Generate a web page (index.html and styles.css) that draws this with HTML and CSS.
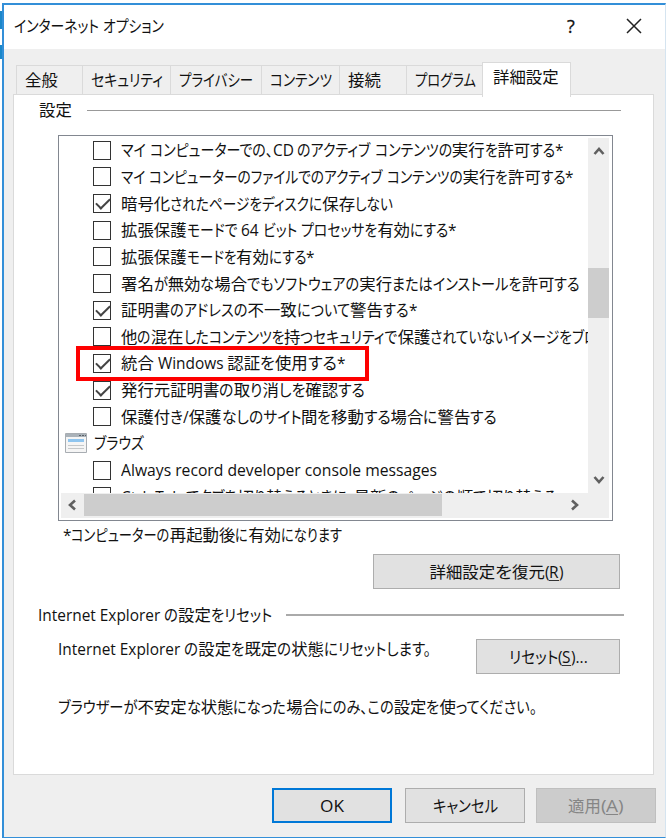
FILE: index.html
```html
<!DOCTYPE html>
<html lang="ja">
<head>
<meta charset="utf-8">
<title>インターネット オプション</title>
<link rel="stylesheet" href="styles.css">
</head>
<body>
<div class="edge"><i></i><i></i></div>
<main class="window">
  <header class="titlebar">
    <span class="fit" data-w="150">インターネット オプション</span>
    <span class="help">?</span>
    <svg class="close" viewBox="0 0 16 16"><path d="M1 1 15 15M15 1 1 15"/></svg>
  </header>
  <nav class="tabs">
    <div class="tab t1"><span class="fit" data-w="33">全般</span></div>
    <div class="tab t2"><span class="fit" data-w="72">セキュリティ</span></div>
    <div class="tab t3"><span class="fit" data-w="74">プライバシー</span></div>
    <div class="tab t4"><span class="fit" data-w="62">コンテンツ</span></div>
    <div class="tab t5"><span class="fit" data-w="33">接続</span></div>
    <div class="tab t6"><span class="fit" data-w="61">プログラム</span></div>
    <div class="tab active"><span class="fit" data-w="66">詳細設定</span></div>
  </nav>
  <section class="pane">
    <div class="heading h-settings"><span class="fit" data-w="33">設定</span><hr></div>
    <div class="listbox">
      <div class="view">
        <div class="row"><i class="box"></i><span class="fit" data-w="443">マイ コンピューターでの、CD のアクティブ コンテンツの実行を許可する*</span></div>
        <div class="row"><i class="box"></i><span class="fit" data-w="453">マイ コンピューターのファイルでのアクティブ コンテンツの実行を許可する*</span></div>
        <div class="row"><i class="box on"></i><span class="fit" data-w="272">暗号化されたページをディスクに保存しない</span></div>
        <div class="row"><i class="box"></i><span class="fit" data-w="336">拡張保護モードで 64 ビット プロセッサを有効にする*</span></div>
        <div class="row"><i class="box"></i><span class="fit" data-w="194">拡張保護モードを有効にする*</span></div>
        <div class="row"><i class="box"></i><span class="fit" data-w="459">署名が無効な場合でもソフトウェアの実行またはインストールを許可する</span></div>
        <div class="row"><i class="box on"></i><span class="fit" data-w="296">証明書のアドレスの不一致について警告する*</span></div>
        <div class="row"><i class="box"></i><span class="fit" data-w="477">他の混在したコンテンツを持つセキュリティで保護されていないイメージをブロ</span></div>
        <div class="row"><i class="box on"></i><span class="fit" data-w="224">統合 Windows 認証を使用する*</span></div>
        <div class="row"><i class="box on"></i><span class="fit" data-w="244">発行元証明書の取り消しを確認する</span></div>
        <div class="row"><i class="box"></i><span class="fit" data-w="376">保護付き/保護なしのサイト間を移動する場合に警告する</span></div>
        <div class="row group">
          <svg class="page" viewBox="0 0 22 20"><path fill="#f5f5f5" stroke="#a8adb2" d="M.5.5h21v19H.5z"/><path fill="#aab2b9" d="M1 1h20v3H1z"/><path stroke="#596168" stroke-dasharray="2 1" d="M14 2.5h7"/><path fill="#8fc5ef" d="M3 6h16v3H3z"/><path stroke="#c5c8ca" d="M3 12.5h16M3 15.5h16"/></svg>
          <span class="fit" data-w="50">ブラウズ</span>
        </div>
        <div class="row"><i class="box"></i><span class="fit" data-w="316">Always record developer console messages</span></div>
        <div class="row"><i class="box"></i><span class="fit" data-w="436">Ctrl+Tab でタブを切り替えるときに、最新のページの順で切り替える</span></div>
      </div>
      <div class="vbar">
        <svg viewBox="0 0 12 10"><path d="M1.5 8 6 3 10.500 8"/></svg>
        <div class="vthumb"></div>
        <svg class="down" viewBox="0 0 12 10"><path d="M1.500 2 6 7 10.500 2"/></svg>
      </div>
      <div class="hbar">
        <svg viewBox="0 0 10 12"><path d="M8 1.500 3 6 8 10.500"/></svg>
        <div class="hthumb"></div>
        <svg class="right" viewBox="0 0 10 12"><path d="M2 1.500 7 6 2 10.500"/></svg>
      </div>
      <div class="highlight"></div>
    </div>
    <p class="note"><span class="fit" data-w="279">*コンピューターの再起動後に有効になります</span></p>
    <div class="btn restore"><span class="fit" data-w="134">詳細設定を復元(<u>R</u>)</span></div>
    <div class="heading h-reset"><span class="fit" data-w="234">Internet Explorer の設定をリセット</span><hr></div>
    <div class="reset">
      <span class="fit" data-w="373">Internet Explorer の設定を既定の状態にリセットします。</span>
      <div class="btn"><span class="fit" data-w="79">リセット(<u>S</u>)...</span></div>
    </div>
    <p class="advice"><span class="fit" data-w="479">ブラウザーが不安定な状態になった場合にのみ、この設定を使ってください。</span></p>
  </section>
  <footer class="actions">
    <div class="btn primary"><span class="fit" data-w="24">OK</span></div>
    <div class="btn"><span class="fit" data-w="65">キャンセル</span></div>
    <div class="btn disabled"><span class="fit" data-w="56">適用(<u>A</u>)</span></div>
  </footer>
</main>
<script src="labels.js"></script>
</body>
</html>
```
FILE: styles.css
```css
* { box-sizing: border-box; }
body {
  margin: 0;
  width: 666px;
  height: 839px;
  overflow: hidden;
  display: flex;
  background: #fff;
  color: #111;
  font: 16.4px/26px "Open Sans", "Noto Sans CJK JP", sans-serif;
  font-feature-settings: "palt";
}
p { margin: 0; }
.edge { width: 2px; flex: none; padding-top: 11px; }
.edge i { display: block; height: 18px; background: #1b87c9; }
.edge i + i { margin-top: 16px; height: 14px; }
.window {
  flex: none;
  width: 664px;
  height: 835px;
  margin-top: 3px;
  border: 2px solid #338fd8;
  border-width: 2px 1px 1px 2px;
  border-right-color: #d5e4f0;
  background: #efefef;
}
.fit { display: inline-block; white-space: pre; flex: none; }
.run { display: inline-block; white-space: pre; transform-origin: 0 50%; }
u { text-decoration: none; box-shadow: inset 0 -1px #333; display: inline-block; height: 22px; line-height: 26px; vertical-align: baseline; }

.titlebar {
  display: flex;
  align-items: center;
  height: 44px;
  padding: 0 23px 2px 10px;
  background: #fff;
}
.help { margin-left: auto; font-size: 18px; width: 9px; -webkit-text-stroke: .3px #111; }
.close { width: 16px; height: 16px; margin-left: 50px; fill: none; stroke: #222; stroke-width: 1.5; }

.tabs { display: flex; align-items: flex-end; height: 46px; padding: 0 0 0 12px; }
.tab {
  height: 30px;
  border-top: 1.5px solid #dadada;
  border-left: 1.5px solid #dadada;
  padding: 1px 0 0 8px;
}
.t1 { width: 66px; }
.t2 { width: 88px; }
.t3 { width: 91px; }
.t4 { width: 78px; }
.t5 { width: 67px; }
.t6 { width: 76px; }
.tab.active {
  width: 89px;
  height: 35px;
  margin-bottom: -2px;
  padding: 1px 0 0 10px;
  border-right: 1.5px solid #dadada;
  background: #fff;
  position: relative;
}
.pane {
  width: 641px;
  height: 681px;
  margin-left: 9px;
  border: 1.5px solid #dadada;
  background: #fff;
}
.tabs + .pane { margin-top: -1px; }

.heading { display: flex; align-items: center; }
.heading hr { height: 1px; border: 0; margin: 0; background: #999; }
.h-settings { height: 26px; margin-top: 2px; padding-left: 25px; }
.h-settings hr { width: 534px; margin-left: 15px; }

.listbox {
  position: relative;
  display: grid;
  grid-template: 355px 25px / 527px 23px;
  width: 555px;
  height: 386px;
  margin: 12px 0 0 44px;
  padding: 2px;
  border: 1px solid #828790;
  background: #fff;
}
.view { overflow: hidden; }
.row { display: flex; align-items: center; height: 26.65px; padding-left: 32px; }
.row:first-child { margin-top: -1px; }
.box {
  flex: none;
  width: 18px;
  height: 19px;
  margin-right: 10px;
  border: 1.5px solid #333;
  position: relative;
}
.box.on::after {
  content: "";
  position: absolute;
  left: 2px;
  top: 3px;
  width: 12px;
  height: 6px;
  border: solid #444;
  border-width: 0 0 2px 2px;
  transform: rotate(-45deg);
}
.group { padding-left: 4px; }
.page { width: 22px; height: 20px; margin-right: 7px; fill: none; }
.vbar { width: 21px; background: #efefef; display: flex; flex-direction: column; align-items: center; padding: 8px 0; }
.vbar svg { width: 12px; height: 10px; }
.listbox svg:not(.page) { fill: none; stroke: #606060; stroke-width: 2.6; flex: none; }
.vthumb { width: 21px; height: 50px; margin-top: 112px; background: #cdcdcd; }
.down { margin-top: 157px; }
.hbar { grid-column: 1 / 3; width: 548px; height: 25px; background: #efefef; display: flex; align-items: center; padding: 0 0 2px 6px; }
.hbar svg { width: 10px; height: 12px; }
.hthumb { width: 358px; height: 22px; margin-left: 7px; background: #cdcdcd; }
.right { margin-left: 128px; }
.highlight { position: absolute; left: 17px; top: 210px; width: 293px; height: 35px; border: 4px solid #fe0000; }

.note { height: 26px; margin: 1px 0 0 49px; }
.btn {
  flex: none;
  display: flex;
  align-items: center;
  justify-content: center;
  width: 120px;
  height: 35px;
  border: 1.5px solid #adadad;
  background: #e1e1e1;
}
.restore { width: 247px; margin: 6px 0 0 359px; }
.h-reset { height: 26px; margin-top: 13px; padding-left: 24px; }
.h-reset hr { width: 338px; margin-left: 14px; height: 2px; background: #aaa; }
.reset { display: flex; align-items: flex-start; margin-top: 8px; padding-left: 44px; height: 52px; }
.reset .btn { width: 144px; margin: 3px 0 0 45px; }
.advice { padding-left: 44px; margin-top: 6px; }

.actions { display: flex; margin: 13px 0 0 268px; }
.btn.primary { border: 2px solid #0078d7; }
.actions .btn + .btn { margin-left: 13px; }
.actions .btn + .disabled { margin-left: 11px; }
.btn.disabled { background: #cccccc; border-color: #bfbfbf; color: #858585; }
.disabled u { box-shadow: inset 0 -1px #858585; }
```
FILE: labels.js
```js
// Condense kana so that every label takes its UI width; kanji keep their full width.
const pattern = /[\u3040-\u30ff\u3001\u3002]+|[\u0020-\u007e]+|[^\u0020-\u007e\u3040-\u30ff\u3001\u3002]+/g;
for (const label of document.querySelectorAll('.fit')) {
  const target = Number(label.dataset.w);
  const walker = document.createTreeWalker(label, NodeFilter.SHOW_TEXT);
  const nodes = [];
  while (walker.nextNode()) nodes.push(walker.currentNode);
  const runs = [];
  for (const node of nodes) {
    const parts = node.data.match(pattern).map(text => {
      const span = document.createElement('span');
      span.className = 'run';
      span.textContent = text;
      const kind = /[\u3040-\u30ff\u3001]/.test(text) ? 'kana' : /[ -~]/.test(text) ? 'latin' : 'kanji';
      runs.push({ span, kind });
      return span;
    });
    node.replaceWith(...parts);
  }
  const sum = kind => runs.filter(r => r.kind === kind).reduce((s, r) => s + r.w, 0);
  for (const r of runs) r.w = r.span.getBoundingClientRect().width;
  const kana = sum('kana'), latin = sum('latin'), kanji = sum('kanji');
  const scale = { kanji: 1, latin: 0.94, kana: 1 };
  if (kana) scale.kana = (target - kanji - latin * scale.latin) / kana;
  else if (latin) scale.latin = (target - kanji) / latin;
  for (const r of runs) {
    r.span.style.width = r.w * scale[r.kind] + 'px';
    r.span.style.transform = `scaleX(${scale[r.kind]})`;
  }
  label.style.width = target + 'px';
}
```
